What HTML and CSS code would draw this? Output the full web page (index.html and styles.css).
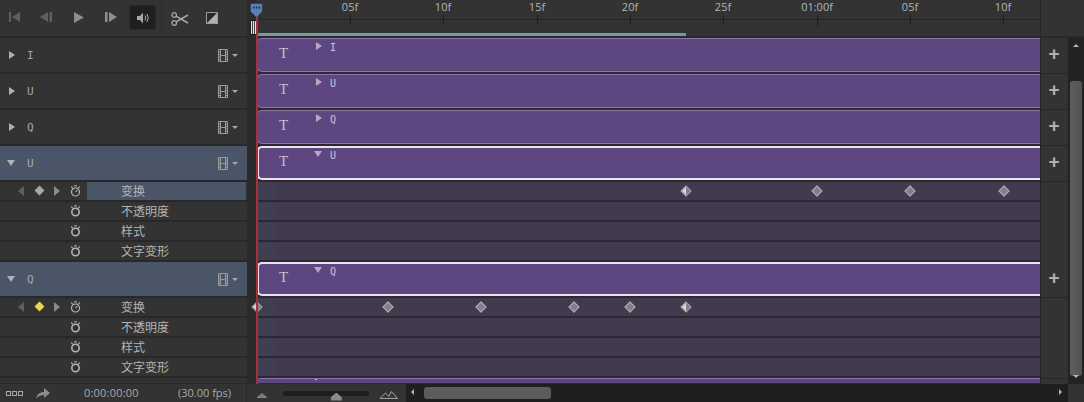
FILE: index.html
```html
<!DOCTYPE html>
<html>
<head>
  <title>Timeline</title>
  <meta name="viewport" content="width=device-width, initial-scale=1">
  <link rel="stylesheet" href="styles.css">
</head>
<body>
  <svg class="defs" width="0" height="0">
    <symbol id="film" viewBox="0 0 11 13">
      <path d="M.5.5h9v12h-9zM2.500.5v12M7.500.5v12M2.500 6.500h5M.5 3h2M.5 5.500h2M.5 8h2M.5 10.500h2M7.500 3h2M7.500 5.500h2M7.500 8h2M7.500 10.500h2" fill="none" stroke="#9a9a9a"/>
    </symbol>
    <symbol id="watch" viewBox="0 0 11 12">
      <circle cx="5.500" cy="7" r="3.700" fill="none" stroke="#b4b4b4" stroke-width="1.600"/>
      <path d="M4 .9h3M1.200 1.500l1.800 2M9.800 1.500L8 3.500" fill="none" stroke="#a0a0a0" stroke-width="1.200"/>
    </symbol>
    <symbol id="watch-on" viewBox="0 0 11 12">
      <circle cx="5.500" cy="7" r="4" fill="none" stroke="#b4b4b4" stroke-width="1.200"/>
      <path d="M4 .9h3M1.200 1.500l1.800 2M9.800 1.500L8 3.500M5.500 7l2-2" fill="none" stroke="#a0a0a0" stroke-width="1.200"/>
    </symbol>
  </svg>

  <div class="app">
    <div class="main">
      <div class="rows">
        <div class="row row-top">
          <div class="head toolbar">
            <svg class="tb" style="left:9px" width="12" height="10" viewBox="0 0 12 10"><path d="M0 0h2v10H0zM11 0v10L3 5z" fill="#5f5f5f"/></svg>
            <svg class="tb" style="left:40px" width="12" height="10" viewBox="0 0 12 10"><path d="M8 0v10L0 5zM9.500 0H12v10H9.500z" fill="#5f5f5f"/></svg>
            <svg class="tb" style="left:74px" width="10" height="11" viewBox="0 0 10 11"><path d="M0 0l10 5.500L0 11z" fill="#8e8e8e"/></svg>
            <svg class="tb" style="left:105px" width="12" height="10" viewBox="0 0 12 10"><path d="M0 0h2.500v10H0zM4 0l8 5-8 5z" fill="#8e8e8e"/></svg>
            <div class="sound">
              <svg width="12" height="12" viewBox="0 0 12 12"><path d="M0 4h3l3-3.500v11L3 8H0z" fill="#a8a8a8"/><path d="M8 3.500q1.500 2.500 0 5M10 2q2.500 4 0 8" fill="none" stroke="#a8a8a8"/></svg>
            </div>
            <span class="tool-sep"></span>
            <svg class="tb" style="left:171px" width="18" height="14" viewBox="0 0 18 14"><circle cx="3.200" cy="3" r="2.300" fill="none" stroke="#a8a8a8" stroke-width="1.300"/><circle cx="3.200" cy="11" r="2.300" fill="none" stroke="#a8a8a8" stroke-width="1.300"/><path d="M5 4.200L17 11M5 9.800L17 3" stroke="#a8a8a8" stroke-width="1.500"/></svg>
            <svg class="tb" style="left:206px" width="12" height="12" viewBox="0 0 12 12"><path d="M0 0h12v12H0z" fill="#2a2a2a"/><path d="M12 0v12H0z" fill="#b0b0b0"/><path d="M.5.500h11v11H.5z" fill="none" stroke="#9c9c9c"/></svg>
          </div>
          <div class="gutter"></div>
          <div class="ruler">
            <div class="ruler-labels">
              <span class="tick" style="left:94px">05f</span>
              <span class="tick" style="left:187px">10f</span>
              <span class="tick" style="left:281px">15f</span>
              <span class="tick" style="left:374px">20f</span>
              <span class="tick" style="left:467px">25f</span>
              <span class="tick tick-major" style="left:561px">01:00f</span>
              <span class="tick" style="left:654px">05f</span>
              <span class="tick" style="left:747px">10f</span>
            </div>
            <div class="work-band"><div class="work-bar"></div></div>
          </div>
          <div class="plus plus-empty"></div>
        </div>

        <div class="row">
          <div class="head"><span class="tri"></span><span class="name">I</span><span class="film"><svg width="11" height="13"><use href="#film"/></svg><i class="caret"></i></span></div>
          <div class="gutter"></div>
          <div class="track"><div class="clip"><span class="clip-t">T</span><span class="clip-tri"></span><span class="clip-name">I</span></div></div>
          <div class="plus">+</div>
        </div>
        <div class="row">
          <div class="head"><span class="tri"></span><span class="name">U</span><span class="film"><svg width="11" height="13"><use href="#film"/></svg><i class="caret"></i></span></div>
          <div class="gutter"></div>
          <div class="track"><div class="clip"><span class="clip-t">T</span><span class="clip-tri"></span><span class="clip-name">U</span></div></div>
          <div class="plus">+</div>
        </div>
        <div class="row">
          <div class="head"><span class="tri"></span><span class="name">Q</span><span class="film"><svg width="11" height="13"><use href="#film"/></svg><i class="caret"></i></span></div>
          <div class="gutter"></div>
          <div class="track"><div class="clip"><span class="clip-t">T</span><span class="clip-tri"></span><span class="clip-name">Q</span></div></div>
          <div class="plus">+</div>
        </div>

        <div class="row row-open">
          <div class="head"><span class="tri-down"></span><span class="name">U</span><span class="film"><svg width="11" height="13"><use href="#film"/></svg><i class="caret"></i></span></div>
          <div class="gutter"></div>
          <div class="track"><div class="clip clip-on"><span class="clip-t">T</span><span class="clip-tri-down"></span><span class="clip-name">U</span></div></div>
          <div class="plus">+</div>
        </div>
        <div class="row-sub">
          <div class="head-sub"><span class="nav-l"></span><span class="nav-d"></span><span class="nav-r"></span><svg class="sw" width="11" height="12"><use href="#watch-on"/></svg><span class="prop prop-on">变换</span></div>
          <div class="gutter"></div>
          <div class="sub-track">
            <span class="key key-half" style="left:429px"></span>
            <span class="key" style="left:560px"></span>
            <span class="key" style="left:653px"></span>
            <span class="key" style="left:747px"></span>
          </div>
          <div class="plus-sub"></div>
        </div>
        <div class="row-sub">
          <div class="head-sub"><svg class="sw" width="11" height="12"><use href="#watch"/></svg><span class="prop">不透明度</span></div>
          <div class="gutter"></div><div class="sub-track"></div><div class="plus-sub"></div>
        </div>
        <div class="row-sub">
          <div class="head-sub"><svg class="sw" width="11" height="12"><use href="#watch"/></svg><span class="prop">样式</span></div>
          <div class="gutter"></div><div class="sub-track"></div><div class="plus-sub"></div>
        </div>
        <div class="row-sub">
          <div class="head-sub"><svg class="sw" width="11" height="12"><use href="#watch"/></svg><span class="prop">文字变形</span></div>
          <div class="gutter"></div><div class="sub-track"></div><div class="plus-sub"></div>
        </div>

        <div class="row row-open">
          <div class="head"><span class="tri-down"></span><span class="name">Q</span><span class="film"><svg width="11" height="13"><use href="#film"/></svg><i class="caret"></i></span></div>
          <div class="gutter"></div>
          <div class="track"><div class="clip clip-on"><span class="clip-t">T</span><span class="clip-tri-down"></span><span class="clip-name">Q</span></div></div>
          <div class="plus">+</div>
        </div>
        <div class="row-sub">
          <div class="head-sub"><span class="nav-l"></span><span class="nav-d nav-d-on"></span><span class="nav-r"></span><svg class="sw" width="11" height="12"><use href="#watch-on"/></svg><span class="prop">变换</span></div>
          <div class="gutter"></div>
          <div class="sub-track">
            <span class="key key-half" style="left:0"></span>
            <span class="key" style="left:131px"></span>
            <span class="key" style="left:224px"></span>
            <span class="key" style="left:317px"></span>
            <span class="key" style="left:373px"></span>
            <span class="key key-half" style="left:429px"></span>
          </div>
          <div class="plus-sub"></div>
        </div>
        <div class="row-sub">
          <div class="head-sub"><svg class="sw" width="11" height="12"><use href="#watch"/></svg><span class="prop">不透明度</span></div>
          <div class="gutter"></div><div class="sub-track"></div><div class="plus-sub"></div>
        </div>
        <div class="row-sub">
          <div class="head-sub"><svg class="sw" width="11" height="12"><use href="#watch"/></svg><span class="prop">样式</span></div>
          <div class="gutter"></div><div class="sub-track"></div><div class="plus-sub"></div>
        </div>
        <div class="row-sub">
          <div class="head-sub"><svg class="sw" width="11" height="12"><use href="#watch"/></svg><span class="prop">文字变形</span></div>
          <div class="gutter"></div><div class="sub-track"></div><div class="plus-sub"></div>
        </div>

        <div class="row-cut">
          <div class="head-cut"></div>
          <div class="gutter"></div>
          <div class="track-cut"><div class="clip-cut"></div></div>
          <div class="plus-cut"></div>
        </div>
      </div>

      <div class="vscroll">
        <div class="vscroll-top"></div>
        <div class="vscroll-body">
          <span class="arrow-up"></span>
          <div class="vthumb"></div>
          <span class="arrow-down"></span>
        </div>
      </div>

      <div class="playhead">
        <svg class="playhead-cap" width="13" height="15" viewBox="0 0 13 15"><path d="M1.500.5h10l1 1v7L6.500 14.500 .5 8.500v-7z" fill="#5a7fb5" stroke="#2c3f5c"/><path d="M3 3.500h1.500v2H3zM5.800 3.500h1.500v2H5.800zM8.600 3.500h1.500v2H8.600z" fill="#1e2c42"/></svg>
        <div class="playhead-grip"></div>
        <div class="playhead-line"></div>
      </div>
    </div>

    <div class="footer">
      <div class="foot-left">
        <span class="dots"><i></i><i></i><i></i></span>
        <svg class="share" width="14" height="11" viewBox="0 0 14 11"><path d="M0 11C1 6 4 4 8 4V0l6 5-6 5V7C5 7 2 8 0 11z" fill="#8c8c8c"/></svg>
        <span class="time">0:00:00:00</span>
        <span class="fps">(30.00 fps)</span>
      </div>
      <div class="foot-zoom">
        <svg class="zoom-small" width="10" height="5" viewBox="0 0 10 5"><path d="M0 4.500h10L5 .5z" fill="#777" stroke="#aaa" stroke-width=".6"/></svg>
        <div class="zoom-track"><span class="zoom-thumb"></span></div>
        <svg class="zoom-big" width="18" height="8" viewBox="0 0 18 8"><path d="M0 7.500h18M0 7.500L5.500 2 9 5.500 11.500 .5 18 7.500" fill="none" stroke="#a8a8a8"/></svg>
      </div>
      <div class="hscroll">
        <span class="arrow-left"></span>
        <div class="hthumb"></div>
        <span class="arrow-right"></span>
      </div>
      <div class="corner"></div>
    </div>
  </div>
</body>
</html>
```

FILE: styles.css
```css
* {
  box-sizing: border-box;
}

html, body {
  margin: 0;
  padding: 0;
  background: #333;
}

body {
  font-family: "Open Sans", "Noto Sans CJK SC", sans-serif;
  font-size: 11px;
  color: #a8a8a8;
}

.defs {
  position: absolute;
}

.app {
  width: 1084px;
  height: 402px;
  overflow: hidden;
  display: flex;
  flex-direction: column;
}

.main {
  position: relative;
  height: 384px;
  display: flex;
}

.rows {
  width: 1068px;
  display: flex;
  flex-direction: column;
}

.row {
  height: 36px;
  display: flex;
  flex: none;
}

.row-top {
  height: 38px;
}

.gutter {
  width: 9px;
  flex: none;
  background: #2b2b2b;
}

/* left side */
.head {
  position: relative;
  width: 247px;
  flex: none;
  display: flex;
  align-items: center;
  background: #333;
  border-bottom: 2px solid #282828;
}

.toolbar {
  border-bottom: 2px solid #292929;
}

.tb {
  position: absolute;
  top: 12px;
}

.sound {
  position: absolute;
  left: 129px;
  top: 5px;
  width: 27px;
  height: 25px;
  display: flex;
  align-items: center;
  justify-content: center;
  background: #1f1f1f;
  border: 1px solid #2a2a2a;
  border-radius: 3px;
}

.tool-sep {
  position: absolute;
  left: 161px;
  top: 2px;
  width: 1px;
  height: 32px;
  background: #2a2a2a;
}

.tri {
  margin-left: 9px;
  width: 0;
  height: 0;
  border-left: 6px solid #b0b0b0;
  border-top: 4.5px solid transparent;
  border-bottom: 4.5px solid transparent;
}

.tri-down {
  margin-left: 7px;
  width: 0;
  height: 0;
  border-top: 6px solid #b0b0b0;
  border-left: 4.500px solid transparent;
  border-right: 4.500px solid transparent;
}

.name {
  position: absolute;
  left: 27px;
  top: 11px;
  font-family: "DejaVu Sans Mono", monospace;
  font-size: 11px;
  line-height: 14px;
}

.film {
  position: absolute;
  left: 218px;
  top: 11px;
  display: flex;
  align-items: center;
  gap: 3px;
}

.caret {
  width: 0;
  height: 0;
  border-top: 3px solid #a8a8a8;
  border-left: 3px solid transparent;
  border-right: 3px solid transparent;
}

.row-open .head {
  background: #4a5568;
}

/* ruler */
.ruler {
  flex: 1;
  display: flex;
  flex-direction: column;
  background: #333;
}

.ruler-labels {
  position: relative;
  height: 20px;
  border-bottom: 1px solid #262626;
}

.tick {
  position: absolute;
  top: 0;
  transform: translateX(-50%);
  font-size: 11px;
  line-height: 14px;
  color: #b4b4b4;
}

.tick::after {
  content: "";
  position: absolute;
  left: 50%;
  top: 15px;
  width: 1px;
  height: 9px;
  background: #1f1f1f;
}

.tick-major::after {
  height: 12px;
}

.work-band {
  flex: 1;
  display: flex;
  align-items: flex-end;
  border-bottom: 2px solid #2d2733;
}

.work-bar {
  width: 429px;
  height: 3px;
  margin-left: 1px;
  background: #6f9f9b;
}

/* tracks */
.track {
  width: 784px;
  flex: none;
  padding: 0 0 2px 1px;
  background: #2e2833;
}

.clip {
  position: relative;
  height: 34px;
  background: #5e4680;
  border: 1px solid #8a76a8;
  border-right: 0;
  border-radius: 5px 0 0 5px;
}

.clip-on {
  background: #5e4680;
  border: 2px solid #e8e2ee;
  border-right: 0;
}

.clip-t {
  position: absolute;
  left: 21px;
  top: 5px;
  font-family: "Liberation Serif", serif;
  font-size: 15px;
  line-height: 18px;
  color: #c6bcd2;
}

.clip-on .clip-t {
  left: 20px;
  top: 4px;
}

.clip-tri {
  position: absolute;
  left: 58px;
  top: 3px;
  width: 0;
  height: 0;
  border-left: 6px solid #b4a8c4;
  border-top: 4px solid transparent;
  border-bottom: 4px solid transparent;
}

.clip-tri-down {
  position: absolute;
  left: 55px;
  top: 3px;
  width: 0;
  height: 0;
  border-top: 6px solid #b4a8c4;
  border-left: 4.500px solid transparent;
  border-right: 4.500px solid transparent;
}

.clip-name {
  position: absolute;
  left: 72px;
  top: 2px;
  font-family: "DejaVu Sans Mono", monospace;
  font-size: 10px;
  line-height: 14px;
  color: #cfc6da;
}

.clip-on .clip-name {
  left: 71px;
  top: 1px;
}

.plus {
  width: 28px;
  flex: none;
  display: flex;
  align-items: center;
  justify-content: center;
  padding-bottom: 3px;
  font-family: "Liberation Sans", sans-serif;
  font-size: 19px;
  font-weight: bold;
  color: #b0b0b0;
  background: #333;
  border-bottom: 1px solid #262626;
  box-shadow: inset 1px 0 #27232b;
}

.plus-empty {
  border-bottom: 2px solid #292929;
}

/* sub rows */
.row-sub {
  height: 20px;
  display: flex;
  flex: none;
}

.head-sub {
  position: relative;
  width: 247px;
  flex: none;
  background: #333;
  border-bottom: 2px solid #282828;
}

.sw {
  position: absolute;
  left: 70px;
  top: 3px;
}

.prop {
  position: absolute;
  left: 87px;
  top: 0;
  width: 159px;
  height: 18px;
  padding-left: 34px;
  font-size: 12px;
  line-height: 20px;
  color: #b4b4b4;
}

.prop-on {
  background: #4a5568;
}

.nav-l, .nav-r, .nav-d {
  position: absolute;
  top: 4px;
}

.nav-l {
  left: 18px;
  width: 0;
  height: 0;
  border-right: 6px solid #5f5f5f;
  border-top: 5px solid transparent;
  border-bottom: 5px solid transparent;
}

.nav-r {
  left: 54px;
  width: 0;
  height: 0;
  border-left: 6px solid #8a8a8a;
  border-top: 5px solid transparent;
  border-bottom: 5px solid transparent;
}

.nav-d {
  left: 36px;
  top: 5px;
  width: 7px;
  height: 7px;
  transform: rotate(45deg);
  background: #a8a8a8;
}

.nav-d-on {
  background: #eada4a;
}

.sub-track {
  position: relative;
  width: 784px;
  flex: none;
  background: linear-gradient(to right, #403f52 19px, #423a4f 19px);
  border-bottom: 2px solid #2d2733;
}

.key {
  position: absolute;
  top: 5px;
  width: 8px;
  height: 8px;
  margin-left: -3px;
  transform: rotate(45deg);
  background: #837f8a;
  border: 1px solid #b0b0b0;
}

.key-half {
  background: linear-gradient(45deg, #d8d8d8 50%, #837f8a 50%);
}

.plus-sub {
  width: 28px;
  flex: none;
  background: #333;
  box-shadow: inset 1px 0 #27232b;
}

/* clipped row at the bottom */
.row-cut {
  flex: 1;
  display: flex;
}

.head-cut {
  width: 247px;
  flex: none;
  background: #333;
  border-bottom: 1px solid #292929;
}

.track-cut {
  width: 784px;
  flex: none;
  padding: 0 0 0 1px;
  background: #2e2833;
}

.clip-cut {
  position: relative;
  height: 5px;
  background: #5e4680;
  border-top: 1px solid #8a76a8;
  border-top-left-radius: 4px;
}

.clip-cut::after {
  content: "";
  position: absolute;
  left: 58px;
  top: 0;
  width: 2px;
  height: 1px;
  background: #c6bcd2;
}

.plus-cut {
  width: 28px;
  flex: none;
  background: #333;
  box-shadow: inset 1px 0 #27232b;
  border-top: 1px solid #262626;
}

/* vertical scrollbar */
.vscroll {
  width: 16px;
  flex: none;
  display: flex;
  flex-direction: column;
}

.vscroll-top {
  height: 38px;
  background: #333;
  border-bottom: 2px solid #292929;
}

.vscroll-body {
  position: relative;
  flex: 1;
  background: #232323;
}

.arrow-up {
  position: absolute;
  left: 5px;
  top: 6px;
  width: 0;
  height: 0;
  border-bottom: 3px solid #b4b4b4;
  border-left: 3px solid transparent;
  border-right: 3px solid transparent;
}

.arrow-down {
  position: absolute;
  left: 5px;
  bottom: 6px;
  width: 0;
  height: 0;
  border-top: 3px solid #b4b4b4;
  border-left: 3px solid transparent;
  border-right: 3px solid transparent;
}

.vthumb {
  position: absolute;
  left: 2px;
  top: 43px;
  width: 12px;
  bottom: 8px;
  background: linear-gradient(to right, #5e5e5e, #525252);
  border-radius: 3px;
}

/* playhead */
.playhead {
  position: absolute;
  left: 250px;
  top: 0;
  width: 14px;
  height: 384px;
  pointer-events: none;
}

.playhead-cap {
  position: absolute;
  left: 0;
  top: 3px;
}

.playhead-grip {
  position: absolute;
  left: 0;
  top: 20px;
  width: 7px;
  height: 15px;
  background: linear-gradient(to right, #e4e4e4 1px, #444 1px, #444 2px, #e4e4e4 2px, #e4e4e4 3px, #444 3px, #444 4px, #e4e4e4 4px);
  border: 1px solid #1c1c1c;
  border-radius: 1px;
}

.playhead-line {
  position: absolute;
  left: 6px;
  top: 17px;
  width: 2px;
  bottom: 0;
  background: #a8303c;
}

/* footer */
.footer {
  height: 18px;
  flex: none;
  display: flex;
  background: #333;
}

.foot-left {
  position: relative;
  width: 247px;
  flex: none;
  border-right: 1px solid #262626;
}

.dots {
  position: absolute;
  left: 6px;
  top: 7px;
  display: flex;
  gap: 1px;
}

.dots i {
  width: 5px;
  height: 5px;
  border: 1px solid #a8a8a8;
}

.share {
  position: absolute;
  left: 36px;
  top: 4px;
}

.time {
  position: absolute;
  left: 84px;
  top: 2px;
  line-height: 14px;
  letter-spacing: .2px;
}

.fps {
  position: absolute;
  left: 178px;
  top: 2px;
  line-height: 14px;
}

.foot-zoom {
  width: 159px;
  flex: none;
  display: flex;
  align-items: center;
  padding: 0 8px 0 10px;
}

.zoom-small {
  margin-top: 5px;
}

.zoom-big {
  margin-top: 3px;
}

.zoom-track {
  position: relative;
  width: 88px;
  height: 5px;
  margin: 0 11px 0 16px;
  background: #1e1e1e;
  border-radius: 3px;
}

.zoom-thumb {
  position: absolute;
  left: 48px;
  top: 2px;
  width: 11px;
  height: 8px;
  background: #8a8a8a;
  clip-path: polygon(50% 0, 100% 60%, 100% 100%, 0 100%, 0 60%);
}

.hscroll {
  position: relative;
  flex: 1;
  background: #1f1f1f;
}

.arrow-left {
  position: absolute;
  left: 5px;
  top: 5px;
  width: 0;
  height: 0;
  border-right: 3px solid #b4b4b4;
  border-top: 3px solid transparent;
  border-bottom: 3px solid transparent;
}

.arrow-right {
  position: absolute;
  right: 6px;
  top: 5px;
  width: 0;
  height: 0;
  border-left: 3px solid #b4b4b4;
  border-top: 3px solid transparent;
  border-bottom: 3px solid transparent;
}

.hthumb {
  position: absolute;
  left: 18px;
  top: 3px;
  width: 127px;
  height: 12px;
  background: #5c5c5c;
  border-radius: 3px;
}

.corner {
  width: 16px;
  flex: none;
  background: #333;
}
```
